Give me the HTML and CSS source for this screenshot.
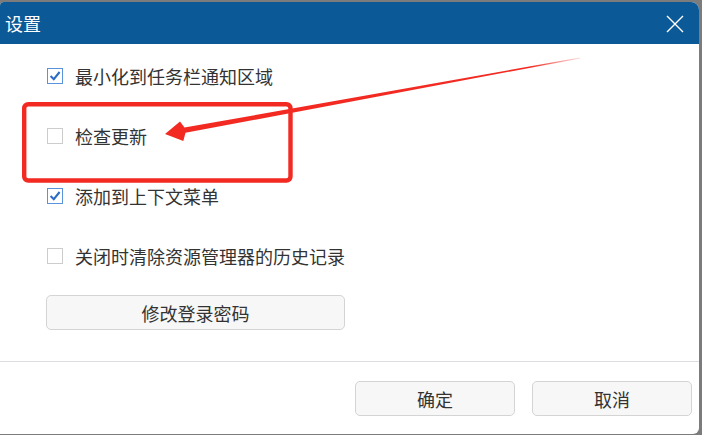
FILE: index.html
```html
<!DOCTYPE html>
<html lang="zh-CN">
<head>
<meta charset="utf-8">
<title>设置</title>
<link rel="stylesheet" href="styles.css">
</head>
<body>
<div class="window">
  <div class="titlebar">
    <span class="title">设置</span>
    <svg class="close" width="18" height="18" viewBox="0 0 18 18"><path d="M1 1 L17 17 M17 1 L1 17" stroke="#fff" stroke-width="1.4" fill="none"/></svg>
  </div>
  <div class="content">
    <div class="row"><span class="cb checked"><svg width="14" height="14" viewBox="0 0 14 14"><path d="M2.6 7 L5.8 10.2 L11.6 3" stroke="#2b6cc4" stroke-width="2" fill="none"/></svg></span><span class="label">最小化到任务栏通知区域</span></div>
    <div class="row"><span class="cb"></span><span class="label">检查更新</span></div>
    <div class="row"><span class="cb checked"><svg width="14" height="14" viewBox="0 0 14 14"><path d="M2.6 7 L5.8 10.2 L11.6 3" stroke="#2b6cc4" stroke-width="2" fill="none"/></svg></span><span class="label">添加到上下文菜单</span></div>
    <div class="row"><span class="cb"></span><span class="label">关闭时清除资源管理器的历史记录</span></div>
    <button class="btn wide">修改登录密码</button>
  </div>
  <div class="footer">
    <button class="btn small">确定</button>
    <button class="btn small">取消</button>
  </div>
</div>
<svg class="annot" width="702" height="435" viewBox="0 0 702 435">
  <defs>
    <linearGradient id="fade" x1="580" y1="58" x2="165" y2="134" gradientUnits="userSpaceOnUse">
      <stop offset="0" stop-color="#f22a22" stop-opacity="0.15"/>
      <stop offset="0.12" stop-color="#f22a22" stop-opacity="1"/>
      <stop offset="1" stop-color="#f22a22" stop-opacity="1"/>
    </linearGradient>
  </defs>
  <rect x="24.2" y="104.2" width="266.3" height="76.3" rx="4" ry="4" fill="none" stroke="#f22a22" stroke-width="4.4"/>
  <polygon points="579.9,57.6 184.5,127.6 180,121.5 165,134 183.3,141 185.5,132.8 580.1,58.4" fill="url(#fade)"/>
</svg>
</body>
</html>
```

FILE: styles.css
```css
html, body {
  margin: 0;
  padding: 0;
}
body {
  width: 702px;
  height: 435px;
  background: #7c7c7c;
  overflow: hidden;
  position: relative;
  font-family: "Noto Sans CJK SC", "Noto Sans", sans-serif;
}
.window {
  margin-top: 2px;
  width: 699px;
  height: 432px;
  background: #ffffff;
  border-radius: 4px 8px 6px 0;
  overflow: hidden;
  display: flex;
  flex-direction: column;
}
.titlebar {
  height: 42px;
  flex: none;
  background: #0b5a97;
  display: flex;
  align-items: center;
  justify-content: space-between;
  padding: 0 15px 0 5px;
}
.title {
  color: #ffffff;
  font-size: 18px;
  line-height: 1;
}
.close {
  display: block;
  margin-top: 1px;
}
.content {
  flex: none;
  height: 318px;
  padding: 2px 0 0 0;
  box-sizing: border-box;
  border-bottom: 1px solid #dcdde2;
  display: flex;
  flex-direction: column;
}
.row {
  height: 60px;
  display: flex;
  align-items: center;
  padding-left: 47px;
}
.cb {
  width: 16px;
  height: 16px;
  box-sizing: border-box;
  border: 1px solid #cdcdcd;
  background: #fff;
  display: flex;
  align-items: center;
  justify-content: center;
  margin-right: 12px;
  flex: none;
}
.cb.checked {
  border-color: #5a93da;
}
.cb svg {
  display: block;
}
.label {
  font-size: 18px;
  color: #333333;
  line-height: 1;
}
.btn {
  font-family: "Noto Sans CJK SC", "Noto Sans", sans-serif;
  font-size: 18px;
  color: #333333;
  background: #f7f7f7;
  border: 1px solid #d4d4d4;
  border-radius: 5px;
  height: 35px;
  padding: 0;
  line-height: 1;
}
.wide {
  width: 299px;
  margin: 9px 0 0 46px;
}
.footer {
  flex: 1;
  display: flex;
  justify-content: flex-end;
  gap: 17px;
  padding: 19px 7px 0 0;
  box-sizing: border-box;
}
.small {
  width: 160px;
}
.annot {
  position: absolute;
  left: 0;
  top: 0;
  pointer-events: none;
}
```
